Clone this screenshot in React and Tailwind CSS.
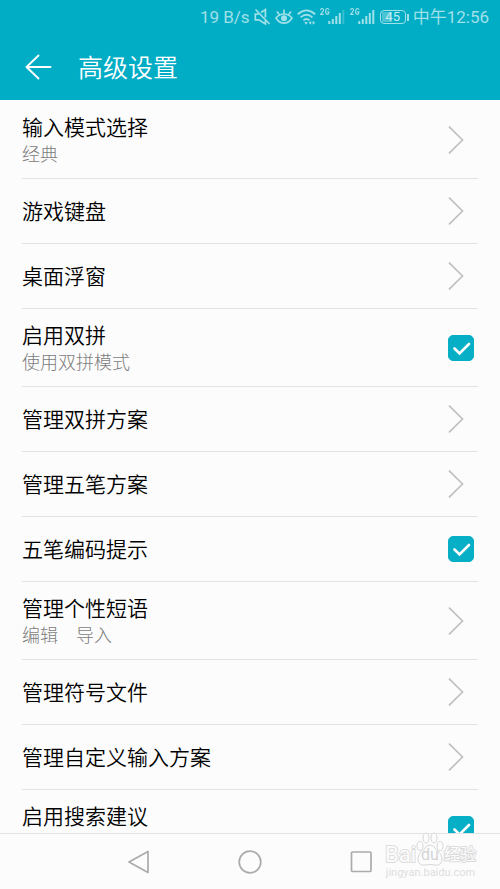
import React, { useState } from "react";

const ROWS = [
  { title: "输入模式选择", sub: "经典" },
  { title: "游戏键盘" },
  { title: "桌面浮窗" },
  { title: "启用双拼", sub: "使用双拼模式", toggle: true },
  { title: "管理双拼方案" },
  { title: "管理五笔方案" },
  { title: "五笔编码提示", toggle: true },
  { title: "管理个性短语", sub: "编辑\u3000导入" },
  { title: "管理符号文件" },
  { title: "管理自定义输入方案" },
  { title: "启用搜索建议", toggle: true, tall: true },
];

function Signal({ weak }) {
  return (
    <svg className="h-5 w-[25px]" viewBox="0 0 25 20" fill="none" stroke="currentColor" aria-hidden="true">
      <path d="M.7 3.2q0-1.7 1.4-1.7t1.4 1.5q0 1-2.8 4.3h3M9 2.8Q8.6 1.5 7.3 1.5 5.7 1.5 5.7 4.4t1.6 2.9q1.5 0 1.5-2.4H7.3" strokeWidth="1.2" />
      <path d="M9.3 14v3M12.8 12v5M16.3 9v8M19.8 6v11" strokeWidth="2" />
      <path d="M23.3 3v14" strokeWidth="2" opacity={weak ? 0.35 : 1} />
    </svg>
  );
}

function StatusBar() {
  return (
    <div className="flex h-[34px] items-center justify-end pr-[11px] text-[17px] leading-5 text-[#a0e0e8]">
      <span className="mr-1">19 B/s</span>
      <svg className="mr-1 h-5 w-[17px]" viewBox="0 0 17 20" fill="none" stroke="currentColor" strokeWidth="1.7" aria-hidden="true">
        <path d="M1.5 2.5l14 14.5M4.5 7.2H1.3v5.6h3.6l6.5 4.2v-3.8M7 5.5l4.4-3v8" />
      </svg>
      <svg className="mr-1 h-5 w-[18px]" viewBox="0 0 18 20" fill="none" stroke="currentColor" strokeWidth="1.7" aria-hidden="true">
        <path d="M1 11q3.200-4 8-4t8 4q-3.200 5.200-8 5.200T1 11zM9 7V2.500M4.600 8L2 4.600M13.400 8L16 4.600" />
        <circle cx="9" cy="11.2" r="3" fill="currentColor" stroke="none" />
      </svg>
      <svg className="mr-1 h-5 w-[19px]" viewBox="0 0 19 20" fill="none" stroke="currentColor" strokeWidth="1.8" aria-hidden="true">
        <path d="M.8 7.2q8.7-7.6 17.4 0M3.6 10.4q5.9-5.2 11.8 0M6.4 13.4q3.1-2.7 6.2 0" />
        <path d="M7.2 15h3.600L9 17.700zM11.600 15.800l2.600-2v4zM18.200 15.800l-2.600-2v4z" fill="currentColor" stroke="none" />
      </svg>
      <span className="mr-[5px]"><Signal weak /></span>
      <span className="mr-[5px]"><Signal /></span>
      <span className="flex items-center">
        <span className="flex h-[14px] w-[26px] items-center justify-center rounded-sm border border-current">
          <span className="flex h-[10px] w-[22px] items-center justify-center bg-[linear-gradient(90deg,#4cc3d2_45%,transparent_45%)] text-[13px] leading-[10px] text-[#c4edf2]">45</span>
        </span>
        <span className="ml-px h-[7px] w-[2px] bg-current" />
      </span>
      <span className="ml-1">中午12:56</span>
    </div>
  );
}

function Chevron() {
  return (
    <svg className="h-7 w-4" viewBox="0 0 16 28" fill="none" stroke="#c0c0c0" strokeWidth="1.7" aria-hidden="true">
      <path d="M1 .6L14.500 14 1 27.400" />
    </svg>
  );
}

function Row({ title, sub, toggle, tall }) {
  const [on, setOn] = useState(true);
  const big = sub || tall;
  const Tag = toggle ? "label" : "button";
  return (
    <li>
      <Tag
        className={`flex w-full justify-between border-b border-[#e2e2e2] text-left ${big ? "h-[78px]" : "h-[65px]"}`}
      >
        <span className={`flex flex-col ${big ? "pt-3" : "justify-center pt-0.5"}`}>
          <span className="text-[21px] leading-[30px] font-[350] text-black">{title}</span>
          {sub && <span className="text-lg leading-6 font-light text-[#7c7c7c]">{sub}</span>}
        </span>
        <span className="flex w-[30px] items-center">
          {toggle ? (
            <span className="grid">
              <input
                type="checkbox"
                checked={on}
                onChange={() => setOn(!on)}
                className="peer col-start-1 row-start-1 size-[26px] appearance-none rounded-[5px] border border-[#bdbdbd] checked:border-[#06aec6] checked:bg-[#06aec6]"
              />
              <svg
                className="pointer-events-none invisible col-start-1 row-start-1 size-[26px] peer-checked:visible"
                viewBox="0 0 26 26"
                fill="none"
                stroke="#fff"
                strokeWidth="2.6"
                strokeLinecap="round"
                aria-hidden="true"
              >
                <path d="M6.500 13.500l5 5L21 9" />
              </svg>
            </span>
          ) : (
            <Chevron />
          )}
        </span>
      </Tag>
    </li>
  );
}

function Watermark() {
  return (
    <div className="pointer-events-none absolute right-6 bottom-[10px] flex flex-col items-center text-[#fcfcfc]">
      <div className="flex items-end leading-6">
        <span className="text-[22px] [paint-order:stroke_fill] [-webkit-text-stroke:2px_#dcdcdc]">Bai</span>
        <span className="flex h-9 w-7 flex-col items-center justify-end">
          <svg className="absolute h-9 w-7" viewBox="0 0 28 36" fill="#fcfcfc" stroke="#d8d8d8" aria-hidden="true">
            <ellipse cx="4" cy="15" rx="3" ry="4.5" />
            <ellipse cx="10" cy="7" rx="3" ry="5" />
            <ellipse cx="18" cy="7" rx="3" ry="5" />
            <ellipse cx="24" cy="15" rx="3" ry="4.5" />
            <path d="M14 14q4 0 6.500 5 6 4 5.500 10-1 6-7 5-5-1-10 0-6 1-7-5-.5-6 5.500-10 2.500-5 6.500-5z" />
          </svg>
          <span className="relative text-base text-[#d4d4d4]">du</span>
        </span>
        <span className="text-base [paint-order:stroke_fill] [-webkit-text-stroke:2px_#dcdcdc]">经验</span>
      </div>
      <span className="text-[11px] leading-3 text-[#dedede]">jingyan.baidu.com</span>
    </div>
  );
}

export default function App() {
  return (
    <div className="flex h-screen flex-col bg-[#fcfcfc] font-[Roboto,'Noto_Sans_CJK_SC',sans-serif]">
      <header className="h-[100px] shrink-0 bg-[#00adc5]">
        <StatusBar />
        <div className="flex h-[66px] items-center pl-[25px] text-white">
          <button aria-label="返回" className="mr-[26px]">
            <svg className="h-[26px] w-[27px]" viewBox="0 0 27 26" fill="none" stroke="currentColor" strokeWidth="1.9" strokeLinecap="round" strokeLinejoin="round">
              <path d="M13.500 1.500L1.500 13l12 11.500M1.500 13H25.500" />
            </svg>
          </button>
          <h1 className="pt-1 text-[25px] leading-9 font-[350]">高级设置</h1>
        </div>
      </header>
      <main className="min-h-0 flex-1 overflow-hidden px-[22px] pt-px">
        <ul>
          {ROWS.map((r) => (
            <Row key={r.title} {...r} />
          ))}
        </ul>
      </main>
      <nav className="relative flex h-14 shrink-0 items-center justify-center gap-[87px] border-t border-[#e2e2e2]">
        <button aria-label="后退">
          <svg className="size-6" viewBox="0 0 24 24" fill="none" stroke="#ababab" strokeWidth="1.700" strokeLinejoin="round">
            <path d="M21 1.500v21L2 12z" />
          </svg>
        </button>
        <button aria-label="主页">
          <svg className="size-6" viewBox="0 0 24 24" fill="none" stroke="#ababab" strokeWidth="1.700">
            <circle cx="12" cy="12" r="10.800" />
          </svg>
        </button>
        <button aria-label="最近任务">
          <svg className="size-6" viewBox="0 0 24 24" fill="none" stroke="#ababab" strokeWidth="1.700">
            <rect x="2.500" y="2" width="19.500" height="19.500" rx="1" />
          </svg>
        </button>
        <Watermark />
      </nav>
    </div>
  );
}
